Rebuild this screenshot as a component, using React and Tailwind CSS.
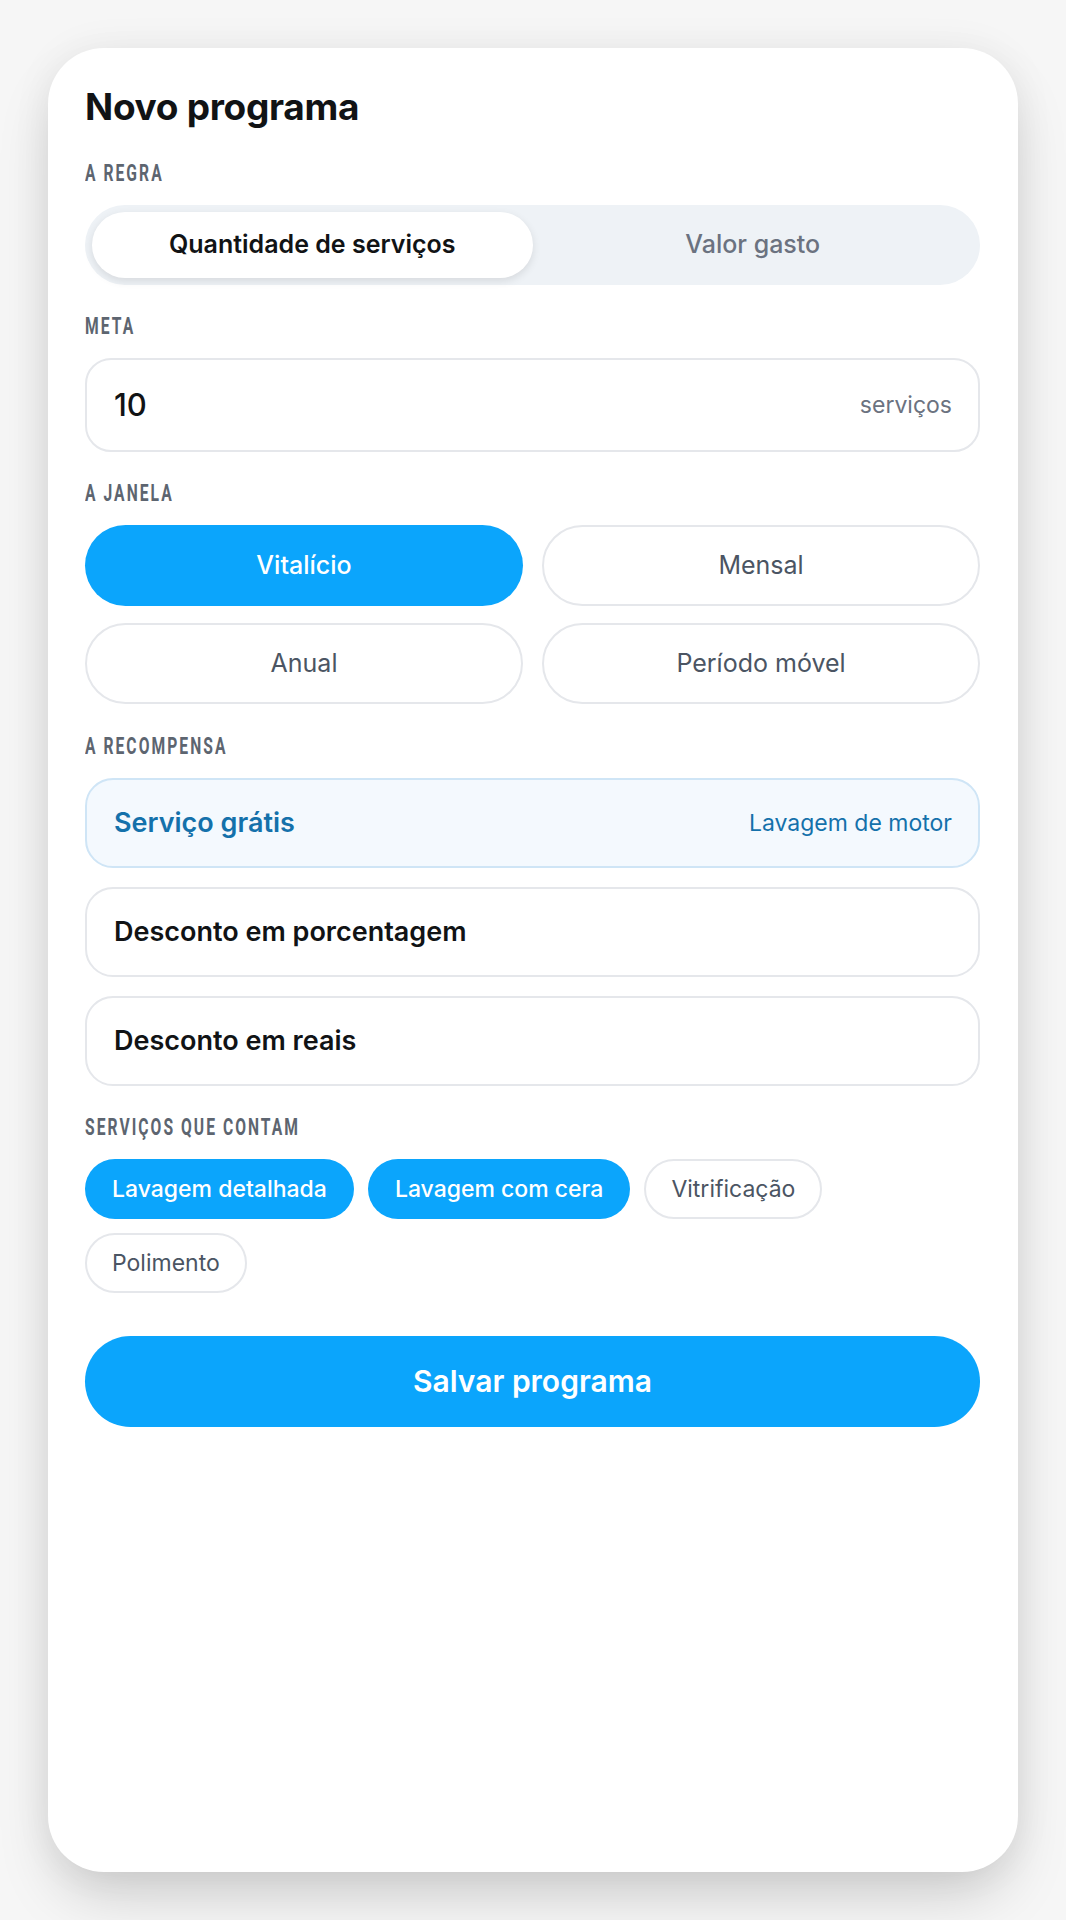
import React from "react";

const font = { fontFamily: "Inter, 'Noto Sans', sans-serif" };

function Label({ children }) {
  return (
    <div className="h-[24px] leading-[24px] mb-[19px] overflow-visible whitespace-nowrap">
      <span
        className="inline-block origin-left scale-x-[0.68] text-[23px] font-bold uppercase tracking-[3px] text-[#5d6570]"
        style={{ fontFamily: "Roboto, 'Liberation Sans', sans-serif" }}
      >
        {children}
      </span>
    </div>
  );
}

export default function App() {
  const janela = ["Vitalício", "Mensal", "Anual", "Período móvel"];
  const chips = [
    { t: "Lavagem detalhada", on: true },
    { t: "Lavagem com cera", on: true },
    { t: "Vitrificação", on: false },
    { t: "Polimento", on: false },
  ];
  return (
    <div className="min-h-[1920px] w-full bg-[#f6f6f6] p-12 flex" style={font}>
      <div className="flex-1 bg-white rounded-[56px] shadow-[0_30px_60px_-10px_rgba(0,0,0,0.18),0_0_40px_rgba(0,0,0,0.06)] pt-[37px] pl-[37px] pr-[38px] flex flex-col">
        <h1 className="text-[37px] leading-[44px] font-bold text-[#111315] tracking-[-0.3px] mb-[33px]">Novo programa</h1>

        <Label>A regra</Label>
        <div className="h-[80px] rounded-full bg-[#eef2f6] p-[7px] grid grid-cols-2">
          <div className="rounded-full bg-white shadow-[0_3px_8px_rgba(0,0,0,0.10)] flex items-center justify-center text-[25px] font-semibold text-[#111315]">
            Quantidade de serviços
          </div>
          <div className="flex items-center justify-center text-[25px] font-medium text-[#6b7280]">Valor gasto</div>
        </div>

        <div className="mt-[30px]">
          <Label>Meta</Label>
          <div className="h-[94px] rounded-[26px] border-2 border-[#e5e7eb] flex items-center justify-between pl-[27px] pr-[26px]">
            <span className="text-[31px] font-medium text-[#111315]">10</span>
            <span className="text-[23px] text-[#6b7280]">serviços</span>
          </div>
        </div>

        <div className="mt-[30px]">
          <Label>A janela</Label>
          <div className="grid grid-cols-2 gap-x-[19px] gap-y-[17px]">
            {janela.map((j, i) => (
              <div
                key={j}
                className={
                  i === 0
                    ? "h-[81px] rounded-full bg-[#0ba5fc] flex items-center justify-center text-[25px] font-medium text-white"
                    : "h-[81px] rounded-full border-2 border-[#e5e7eb] bg-white flex items-center justify-center text-[25px] font-normal text-[#4b5563]"
                }
              >
                {j}
              </div>
            ))}
          </div>
        </div>

        <div className="mt-[31px]">
          <Label>A recompensa</Label>
          <div className="flex flex-col gap-[19px]">
            <div className="h-[90px] rounded-[28px] border-2 border-[#cfe5f6] bg-[#f4f9fe] flex items-center justify-between pl-[27px] pr-[26px]">
              <span className="text-[27px] font-semibold text-[#1471ab]">Serviço grátis</span>
              <span className="text-[23px] text-[#1471ab]">Lavagem de motor</span>
            </div>
            <div className="h-[90px] rounded-[28px] border-2 border-[#e5e7eb] bg-white flex items-center pl-[27px]">
              <span className="text-[27px] font-semibold text-[#111315]">Desconto em porcentagem</span>
            </div>
            <div className="h-[90px] rounded-[28px] border-2 border-[#e5e7eb] bg-white flex items-center pl-[27px]">
              <span className="text-[27px] font-semibold text-[#111315]">Desconto em reais</span>
            </div>
          </div>
        </div>

        <div className="mt-[30px]">
          <Label>Serviços que contam</Label>
          <div className="flex flex-wrap gap-x-[14px] gap-y-[14px]">
            {chips.map((c) => (
              <div
                key={c.t}
                className={
                  c.on
                    ? "h-[60px] rounded-full bg-[#0ba5fc] px-[27px] flex items-center text-[23px] font-medium text-white"
                    : "h-[60px] rounded-full border-2 border-[#e5e7eb] bg-white px-[25px] flex items-center text-[23px] text-[#4b5563]"
                }
              >
                {c.t}
              </div>
            ))}
          </div>
        </div>

        <button className="mt-[43px] h-[91px] w-full rounded-full bg-[#0ba5fc] text-white text-[30px] font-semibold flex items-center justify-center">
          Salvar programa
        </button>
      </div>
    </div>
  );
}
